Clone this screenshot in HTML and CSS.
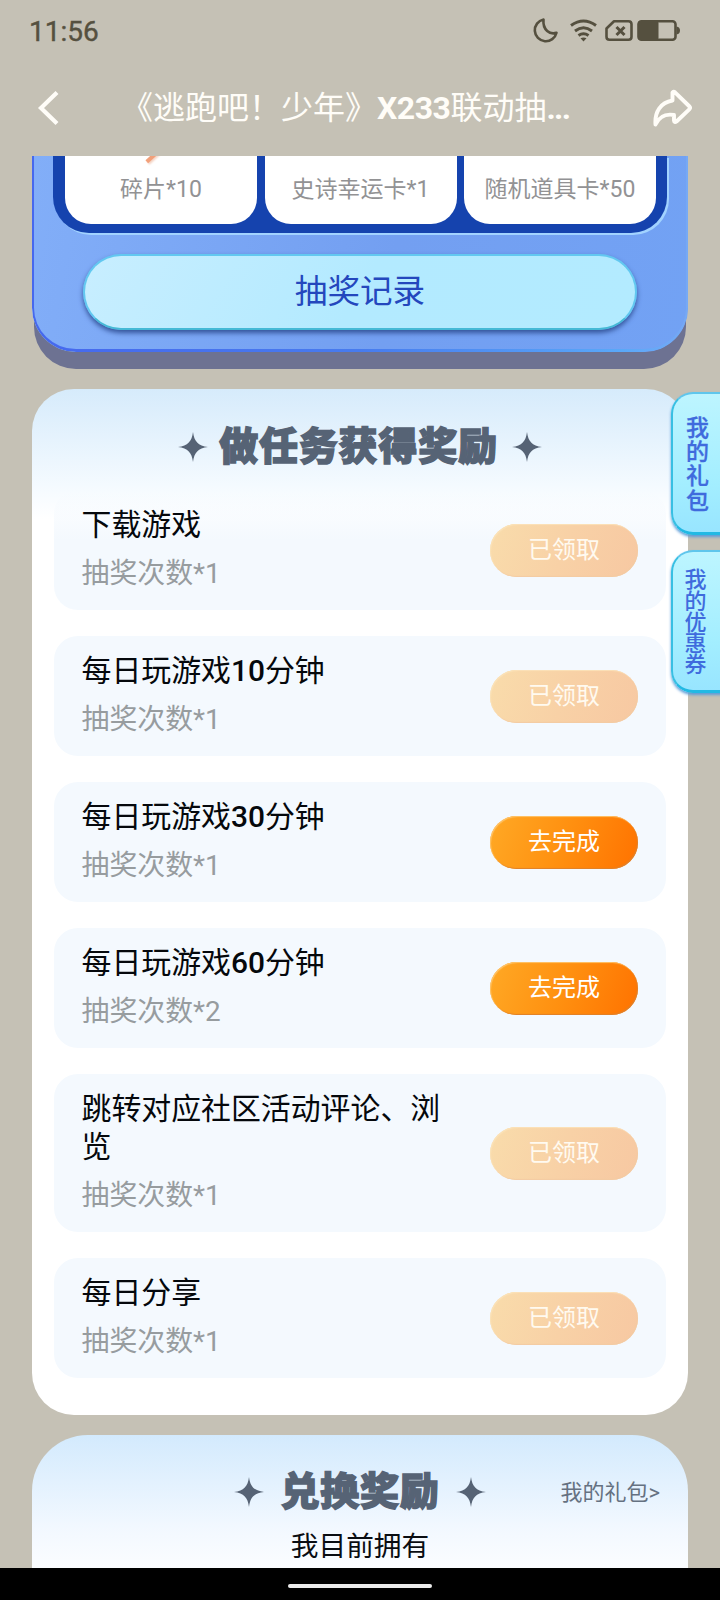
FILE: index.html
```html
<!DOCTYPE html>
<html lang="zh-CN">
<head>
<meta charset="utf-8">
<title>联动抽奖</title>
<link rel="stylesheet" href="styles.css">
</head>
<body>
<svg width="0" height="0" class="defs">
  <symbol id="spark" viewBox="0 0 30 30"><path d="M15 0C16.2 9.5 20 13.8 30 15C20 16.2 16.2 20.5 15 30C13.8 20.5 10 16.2 0 15C10 13.8 13.8 9.5 15 0Z" fill="currentColor"/></symbol>
</svg>
<div class="screen">
  <div class="status">
    <span class="time">11:56</span>
    <svg class="status-icons" viewBox="0 0 150 28" fill="none" stroke="#55503f" stroke-width="2.6">
      <path d="M11.5 3.5A11 11 0 1 0 24.5 16.8C18 19 10.5 14 11.5 3.5Z" stroke-linejoin="round"/>
      <path d="M39 9.500Q51.500 .6 64 9.500M43 15Q51.500 8.600 60 15M46.500 19.500Q51.500 16 56.500 19.500" stroke-width="3"/>
      <path d="M48.500 22.300Q51.500 20.800 54.500 22.300L51.500 25.500Z" fill="#55503f" stroke="none"/>
      <path d="M82 5.300H96.500Q99.500 5.300 99.500 8.300V20.700Q99.500 23.700 96.500 23.700H77.500Q74.500 23.700 74.500 20.700V12.500Z" stroke-linejoin="round"/>
      <path d="M84.500 11L92.500 19M92.500 11L84.500 19" stroke-width="3"/>
      <rect x="106.500" y="5.300" width="37" height="18.400" rx="3"/>
      <rect x="106" y="5" width="20.500" height="19" rx="2" fill="#55503f" stroke="none"/>
      <path d="M144.500 10.500Q148 11 148 14.500Q148 18 144.500 18.500Z" fill="#55503f" stroke="none"/>
    </svg>
  </div>
  <div class="header">
    <svg class="back" viewBox="0 0 24 36"><path d="M20 2.500L4 18L20 33.500" fill="none" stroke="#fffdf8" stroke-width="4.200"/></svg>
    <h1>《逃跑吧！少年》<em>X233</em>联动抽<em class="dots">...</em></h1>
    <svg class="share" viewBox="0 0 42 42"><path d="M21.500 5.500Q22.500 4 24 5.300L38.500 19.500Q39.600 20.800 38.500 22.100L25.500 34.500Q23.500 36 23 33.500V28C14 26.500 8 30 4.500 37.500C3.500 25 9.500 15.500 21.500 13.500Z" fill="none" stroke="#fffdf8" stroke-width="3.900" stroke-linejoin="round"/></svg>
  </div>

  <main class="content">
    <section class="prize-wrap">
      <div class="prize">
        <div class="grid">
          <div class="cell"><i class="shard"></i>碎片*10</div>
          <div class="cell">史诗幸运卡*1</div>
          <div class="cell">随机道具卡*50</div>
        </div>
        <div class="record">抽奖记录</div>
      </div>
    </section>

    <section class="card tasks">
      <h2><svg><use href="#spark"/></svg><span>做任务获得奖励</span><svg><use href="#spark"/></svg></h2>
      <div class="list">
        <div class="task first"><div class="info"><b>下载游戏</b><p>抽奖次数*1</p></div><span class="btn done">已领取</span></div>
        <div class="task"><div class="info"><b>每日玩游戏<em>10</em>分钟</b><p>抽奖次数*1</p></div><span class="btn done">已领取</span></div>
        <div class="task"><div class="info"><b>每日玩游戏<em>30</em>分钟</b><p>抽奖次数*1</p></div><span class="btn">去完成</span></div>
        <div class="task"><div class="info"><b>每日玩游戏<em>60</em>分钟</b><p>抽奖次数*2</p></div><span class="btn">去完成</span></div>
        <div class="task"><div class="info"><b>跳转对应社区活动评论、浏览</b><p>抽奖次数*1</p></div><span class="btn done">已领取</span></div>
        <div class="task"><div class="info"><b>每日分享</b><p>抽奖次数*1</p></div><span class="btn done">已领取</span></div>
      </div>
    </section>

    <section class="card exchange">
      <h2><svg><use href="#spark"/></svg><span>兑换奖励</span><svg><use href="#spark"/></svg></h2>
      <span class="more">我的礼包&gt;</span>
      <p class="own">我目前拥有</p>
    </section>
  </main>

  <aside class="tabs">
    <div class="tab gift">我的礼包</div>
    <div class="tab coupon">我的优惠券</div>
  </aside>
  <footer class="nav"><i></i></footer>
</div>
</body>
</html>
```
FILE: styles.css
```css
* { box-sizing: border-box; margin: 0; padding: 0; }
body { background: #c5c1b5; }
em { font-style: normal; font-weight: 500; }
.defs { position: absolute; }
.screen {
  position: relative;
  display: flex;
  flex-direction: column;
  width: 720px;
  height: 1600px;
  overflow: hidden;
  background: #c5c1b5;
  font-family: Roboto, "Noto Sans CJK SC", sans-serif;
}
.status {
  display: flex;
  justify-content: space-between;
  height: 60px;
  padding: 14px 38px 0 29px;
}
.time { font-size: 28px; line-height: 36px; font-weight: 400; color: #55503f; -webkit-text-stroke: .4px #55503f; }
.status-icons { width: 150px; height: 28px; margin-top: 2px; }
.header {
  display: flex;
  align-items: center;
  height: 96px;
  padding: 0 27px 0 37px;
  color: #fffdf8;
}
.back { width: 24px; height: 36px; }
h1 { flex: 1; padding-left: 60px; font-size: 32px; line-height: 44px; font-weight: 400; white-space: nowrap; }
h1 em { font-weight: 700; letter-spacing: -.5px; }
h1 .dots { letter-spacing: -1.600px; }
.share { width: 42px; height: 42px; }
.content { display: flex; flex-direction: column; flex: 1; min-height: 0; overflow: hidden; padding: 0 32px; }

.prize-wrap { flex: none; height: 213px; margin-bottom: 20px; position: relative; }
.prize-wrap::before {
  content: "";
  position: absolute;
  inset: 0 2px;
  background: #6d7292;
  border-radius: 0 0 42px 42px;
}
.prize {
  position: relative;
  height: 196px;
  padding: 0 19px 0 21px;
  border-radius: 0 0 44px 44px;
  background: linear-gradient(100deg, #82aef8, #739ff1 55%, #72a2f4);
  overflow: hidden;
}
/* gradient outline, open at the top */
.prize::after {
  content: "";
  position: absolute;
  inset: -60px 0 0 0;
  border: 2px solid transparent;
  border-bottom-width: 3px;
  border-radius: 44px;
  background: linear-gradient(90deg, #4668ee, #477bee 50%, #5aa8f8 90%, #76a9f5) border-box;
  -webkit-mask: linear-gradient(#000 0 0) padding-box, linear-gradient(#000 0 0);
  -webkit-mask-composite: xor;
  mask-composite: exclude;
}
.grid {
  display: grid;
  grid-template-columns: 192px 192px 192px;
  gap: 7.5px;
  width: 614px;
  height: 77px;
  padding: 0 0 9px 12px;
  background: #1543ae;
  border-radius: 0 0 36px 36px;
  box-shadow: 2px 2px 0 #a2d3ff;
}
.cell {
  position: relative;
  height: 68px;
  padding-top: 17.500px;
  overflow: hidden;
  background: #fff;
  border-radius: 0 0 26px 26px;
  text-align: center;
  font-size: 23px;
  line-height: 32px;
  color: #929294;
}
.shard { position: absolute; left: 80px; top: -1px; width: 14px; height: 4px; background: #f2a07a; transform: rotate(-42deg); box-shadow: 0 2px 2px #f5d5c6; }
.record {
  width: 554px;
  height: 76px;
  margin: 21px 0 0 30px;
  border: 2px solid #62c8f0;
  border-bottom-color: #45b9d6;
  border-radius: 38px;
  background: linear-gradient(120deg, #c8eeff, #b3eaff 50%, #b3ebff);
  box-shadow: 0 3px 5px #34549a;
  text-align: center;
  font-size: 32.600px;
  line-height: 72px;
  color: #2447bd;
}

.card { flex: none; position: relative; background: linear-gradient(#d6ebfb, #f4faff 96px, #fff 130px); }
.tasks { height: 1026px; margin-bottom: 20px; border-radius: 42px; padding: 38px 22px 0; }
h2 {
  display: flex;
  justify-content: center;
  align-items: center;
  height: 40px;
  font-size: 39px;
  font-weight: 900;
  color: #566375;
}
h2 span { letter-spacing: .8px; -webkit-text-stroke: 1.400px #566375; line-height: 40px; margin: 0 14px 0 11px; }
h2 svg { width: 30px; height: 30px; }
.list { display: flex; flex-direction: column; gap: 26px; margin-top: 23px; }
.task {
  display: flex;
  align-items: center;
  justify-content: space-between;
  min-height: 120px;
  padding: 16px 28px 16px 27.500px;
  border-radius: 24px;
  background: #f4f9fe;
}
.task.first { background: linear-gradient(rgba(244, 249, 254, 0), #f4f9fe 50px); }
.info { width: 365px; }
.info b { display: block; font-size: 29.900px; line-height: 38px; font-weight: 400; color: #05080c; }
.info p { margin-top: 10px; font-size: 27.900px; line-height: 40px; color: #979c9f; }
.btn {
  width: 148px;
  height: 53px;
  border-radius: 27px;
  text-align: center;
  font-size: 24px;
  line-height: 53px;
  color: #fff;
  background: linear-gradient(110deg, #ffa925, #ff9010 50%, #ff7200);
  box-shadow: inset 1px 1px 1px #ffc46a, inset -1px -1px 1px #e0812a;
}
.done { background: linear-gradient(110deg, #f9dcab, #f8d1a6 50%, #f7c8a2); box-shadow: inset 1px 1px 1px #fbe2b8, inset -1px -1px 1px #f3cba3; color: #fffaf0; }

.exchange { height: 300px; border-radius: 56px 56px 0 0; padding-top: 37px; background: linear-gradient(#d3eafd, #f2f8ff 92px, #fff 150px); }
.exchange h2 span { margin: 0 16px; }
.more { position: absolute; right: 28px; top: 42px; font-size: 22px; line-height: 32px; color: #657181; }
.own { margin-top: 15px; text-align: center; font-size: 27.700px; line-height: 40px; color: #0a0d12; }

.tabs { position: absolute; right: 0; top: 392px; display: flex; flex-direction: column; gap: 15px; }
.tab {
  display: flex;
  align-items: center;
  justify-content: center;
  width: 52px;
  height: 143px;
  margin-right: -3px;
  padding: 0 16px 0 11px;
  writing-mode: vertical-rl;
  border: 2px solid #5fc6ec;
  border-bottom: 3px solid #22b9e4;
  border-left-color: #38bfe3;
  border-radius: 22px 0 0 22px;
  background: linear-gradient(#bdf5ff, #a3eeff 65%, #98e5ff);
  box-shadow: 0 2px 3px #5b9bd8;
  color: #3f6bdd;
  font-size: 23px;
  font-weight: 500;
  line-height: 24px;
  white-space: nowrap;
}
.gift { letter-spacing: 1.100px; padding-top: 2px; -webkit-text-stroke: .3px #3f6bdd; }
.coupon { font-size: 22px; letter-spacing: -.8px; padding: 0 18px 0 9px; }
.nav { display: flex; justify-content: center; flex: none; height: 32px; padding-top: 16px; background: #000; }
.nav i { width: 144px; height: 4px; border-radius: 2px; background: #ececec; }
```
